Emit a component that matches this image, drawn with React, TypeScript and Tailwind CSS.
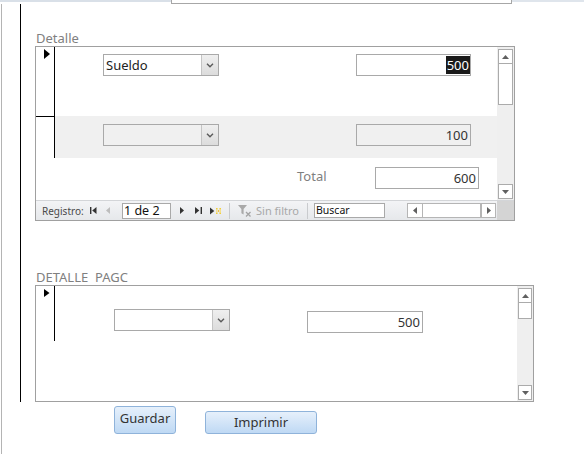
import React from 'react';

// small drop-down arrow used by the combo boxes
const Chevron = () => (
  <svg width="8" height="5" viewBox="0 0 8 5">
    <path d="M1 0.8 L4 3.8 L7 0.8" stroke="#5a5a5a" strokeWidth="1.4" fill="none" />
  </svg>
);

interface ComboProps {
  value?: string;
  gray?: boolean;
  className?: string;
}

const Combo = ({ value, gray, className }: ComboProps) => (
  <div
    className={`flex h-[22px] w-[116px] border border-[#a9a9a9] ${gray ? 'bg-[#f0f0f0]' : 'bg-white'} ${className ?? ''}`}
  >
    <div className="flex-1 pl-[2px] text-[13px] leading-[20px] text-[#222]">{value}</div>
    <div className="flex w-[17px] items-center justify-center border-l border-[#c4c4c4] bg-gradient-to-b from-[#efefef] to-[#dcdcdc]">
      <Chevron />
    </div>
  </div>
);

const Selector = ({ small }: { small?: boolean }) => (
  <svg width="6" height={small ? 8 : 10} viewBox={small ? '0 0 6 8' : '0 0 6 10'}>
    <path d={small ? 'M0 0 L5.5 4 L0 8Z' : 'M0 0 L6 5 L0 10Z'} fill="#000" />
  </svg>
);

const ArrowUp = () => (
  <svg width="7" height="4" viewBox="0 0 7 4">
    <path d="M0 4 L3.5 0 L7 4Z" fill="#606060" />
  </svg>
);

const ArrowDown = () => (
  <svg width="7" height="4" viewBox="0 0 7 4">
    <path d="M0 0 L3.5 4 L7 0Z" fill="#606060" />
  </svg>
);

const ScrollButton = ({ children }: { children: React.ReactNode }) => (
  <div className="flex h-[15px] items-center justify-center border border-[#ababab] bg-white">{children}</div>
);

const VScroll = ({ thumb, width }: { thumb: string; width: string }) => (
  <div className={`flex ${width} flex-col bg-[#efefef] px-[1px] pb-[1px] pt-[2px]`}>
    <ScrollButton>
      <ArrowUp />
    </ScrollButton>
    <div className={`${thumb} border-x border-b border-[#ababab] bg-white`} />
    <div className="flex-1" />
    <ScrollButton>
      <ArrowDown />
    </ScrollButton>
  </div>
);

const NavBar = () => (
  <div className="flex h-[20px] items-center border-t border-[#d3d5d8] bg-gradient-to-b from-[#f3f4f6] to-[#e6e8eb] text-[10px] text-[#4a4a4a]">
    <span className="ml-[6px] w-[48px] leading-[14px]">Registro:</span>
    {/* first */}
    <svg width="7" height="7" viewBox="0 0 7 7">
      <rect x="0" y="0" width="1.4" height="7" fill="#333" />
      <path d="M6.5 0 L2.2 3.5 L6.5 7Z" fill="#333" />
    </svg>
    {/* previous (disabled) */}
    <svg width="4" height="7" viewBox="0 0 4 7" className="ml-[9px]">
      <path d="M4 0 L0 3.5 L4 7Z" fill="#bdbdbd" />
    </svg>
    <div className="ml-[12px] h-[16px] w-[49px] border border-[#a9a9a9] bg-white pl-[1px] text-[12.5px] leading-[14px] text-[#111]">
      1 de 2
    </div>
    {/* next */}
    <svg width="4" height="7" viewBox="0 0 4 7" className="ml-[9px]">
      <path d="M0 0 L4 3.5 L0 7Z" fill="#333" />
    </svg>
    {/* last */}
    <svg width="8" height="7" viewBox="0 0 8 7" className="ml-[11px]">
      <path d="M0 0 L4.3 3.5 L0 7Z" fill="#333" />
      <rect x="5.6" y="0" width="1.4" height="7" fill="#333" />
    </svg>
    {/* new */}
    <svg width="13" height="8" viewBox="0 0 13 8" className="ml-[7px]">
      <path d="M0 0.5 L4.3 4 L0 7.5Z" fill="#333" />
      <rect x="6" y="1" width="1.6" height="1.6" fill="#f3cf3a" />
      <rect x="9.4" y="1" width="1.6" height="1.6" fill="#f3cf3a" />
      <rect x="6" y="5.4" width="1.6" height="1.6" fill="#f3cf3a" />
      <rect x="9.4" y="5.4" width="1.6" height="1.6" fill="#f3cf3a" />
      <rect x="7.7" y="3.2" width="1.6" height="1.6" fill="#e9b520" />
      <rect x="6" y="3.2" width="1" height="1.6" fill="#f6dd70" />
      <rect x="10" y="3.2" width="1" height="1.6" fill="#f6dd70" />
    </svg>
    <div className="ml-[6px] h-[16px] w-[1px] bg-[#c9cbce]" />
    {/* filter */}
    <svg width="14" height="12" viewBox="0 0 14 12" className="ml-[8px]">
      <path d="M0 0 H9 L5.6 4 V9.5 L3.4 8.3 V4Z" fill="#a9a9a9" />
      <path d="M8 7 L12.5 11.5 M12.5 7 L8 11.5" stroke="#a3a3a3" strokeWidth="1.3" />
    </svg>
    <span className="ml-[4px] w-[51px] text-[11px] leading-[14px] text-[#a8a8a8]">Sin filtro</span>
    <div className="h-[16px] w-[1px] bg-[#c9cbce]" />
    <div className="ml-[6px] h-[15px] w-[71px] border border-[#a9a9a9] bg-white pl-[1px] text-[10.5px] leading-[13px] text-[#111]">
      Buscar
    </div>
    {/* horizontal scroll */}
    <div className="ml-[22px] flex h-[15px] w-[89px] border border-[#b5b5b5] bg-[#efefef]">
      <div className="flex w-[15px] items-center justify-center border-r border-[#b5b5b5] bg-white">
        <svg width="4" height="7" viewBox="0 0 4 7">
          <path d="M4 0 L0 3.5 L4 7Z" fill="#606060" />
        </svg>
      </div>
      <div className="w-[59px] border-r border-[#b5b5b5] bg-white" />
      <div className="flex-1" />
      <div className="flex w-[14px] items-center justify-center border-l border-[#b5b5b5] bg-white">
        <svg width="4" height="7" viewBox="0 0 4 7">
          <path d="M0 0 L4 3.5 L0 7Z" fill="#606060" />
        </svg>
      </div>
    </div>
    <div className="ml-auto h-full w-[17px] bg-[#d4d4d4]" />
  </div>
);

export default function App() {
  return (
    <div className="flex h-[454px] w-[584px] flex-col overflow-hidden bg-white font-['Noto_Sans','Open_Sans',sans-serif]">
      {/* edge of the control above */}
      <div className="flex h-[4px] shrink-0">
        <div className="h-[2px] w-[171px] bg-[#d9e0e8]" />
        <div className="h-[4px] w-[341px] border-x border-b border-[#a7a7a7] bg-white" />
        <div className="h-[2px] flex-1 bg-[#dfe5ec]" />
      </div>

      <div className="flex flex-1">
        <div className="ml-[1px] w-[1px] bg-[#b4b4b4]" />
        <div className="ml-[18px] h-[398px] w-[1px] bg-black" />

        <div className="ml-[14px] flex flex-col pt-[26px]">
          <div className="h-[16px] pl-[1px] text-[13px] leading-[16px] text-[#808080]">Detalle</div>

          {/* subform Detalle */}
          <div className="flex h-[175px] w-[480px] flex-col border border-[#a0a0a0]">
            <div className="flex h-[153px]">
              <div className="flex w-[461px] flex-col">
                <div className="flex h-[69px]">
                  <div className="w-[19px] border-r border-black pl-[8px] pt-[2px]">
                    <Selector />
                  </div>
                  <div className="flex flex-1 items-start pl-[48px] pt-[7px]">
                    <Combo value="Sueldo" />
                    <div className="ml-[137px] flex h-[22px] w-[115px] justify-end border border-[#a9a9a9] bg-white">
                      <span className="my-[1px] bg-[#1a1a1a] px-[1px] text-[13px] leading-[18px] text-white">500</span>
                    </div>
                  </div>
                </div>
                <div className="flex h-[42px]">
                  <div className="w-[19px] border-r border-t border-black" />
                  <div className="flex flex-1 items-start bg-[#f0f0f0] pl-[48px] pt-[8px]">
                    <Combo gray />
                    <div className="ml-[137px] h-[22px] w-[115px] border border-[#a9a9a9] bg-[#f0f0f0] pr-[2px] text-right text-[13px] leading-[20px] text-[#333]">
                      100
                    </div>
                  </div>
                </div>
                <div className="flex h-[42px] items-start pl-[261px] pt-[9px]">
                  <span className="mt-[1px] w-[78px] text-[13px] leading-[16px] text-[#7f7f7f]">Total</span>
                  <div className="h-[22px] w-[104px] border border-[#a9a9a9] bg-white pr-[2px] text-right text-[13px] leading-[20px] text-[#333]">
                    600
                  </div>
                </div>
              </div>
              <VScroll width="w-[17px]" thumb="h-[41px]" />
            </div>
            <NavBar />
          </div>

          <div className="mt-[48px] h-[16px] whitespace-pre pl-[1px] text-[13px] leading-[16px] text-[#808080]">
            DETALLE  PAGC
          </div>

          {/* subform DETALLE PAGC */}
          <div className="flex h-[117px] w-[499px] border border-[#a0a0a0]">
            <div className="flex w-[481px] items-start">
              <div className="h-[55px] w-[19px] border-r border-black pl-[8px] pt-[3px]">
                <Selector small />
              </div>
              <div className="flex flex-1 items-start pl-[59px] pt-[23px]">
                <Combo className="h-[21px]" />
                <div className="ml-[77px] mt-[2px] h-[22px] w-[116px] border border-[#a9a9a9] bg-white pr-[2px] text-right text-[13px] leading-[20px] text-[#333]">
                  500
                </div>
              </div>
            </div>
            <VScroll width="w-[16px]" thumb="h-[16px]" />
          </div>

          {/* buttons */}
          <div className="mt-[4px] flex items-start pl-[79px]">
            <button className="h-[28px] w-[62px] rounded-[3px] border border-[#8fb3da] bg-gradient-to-b from-[#e6f0fb] to-[#bfd9f4] pb-[3px] text-[13px] text-[#333]">
              Guardar
            </button>
            <button className="ml-[29px] mt-[5px] h-[23px] w-[112px] rounded-[3px] border border-[#8fb3da] bg-gradient-to-b from-[#e6f0fb] to-[#bfd9f4] text-[13px] text-[#333]">
              Imprimir
            </button>
          </div>
        </div>
      </div>
    </div>
  );
}
